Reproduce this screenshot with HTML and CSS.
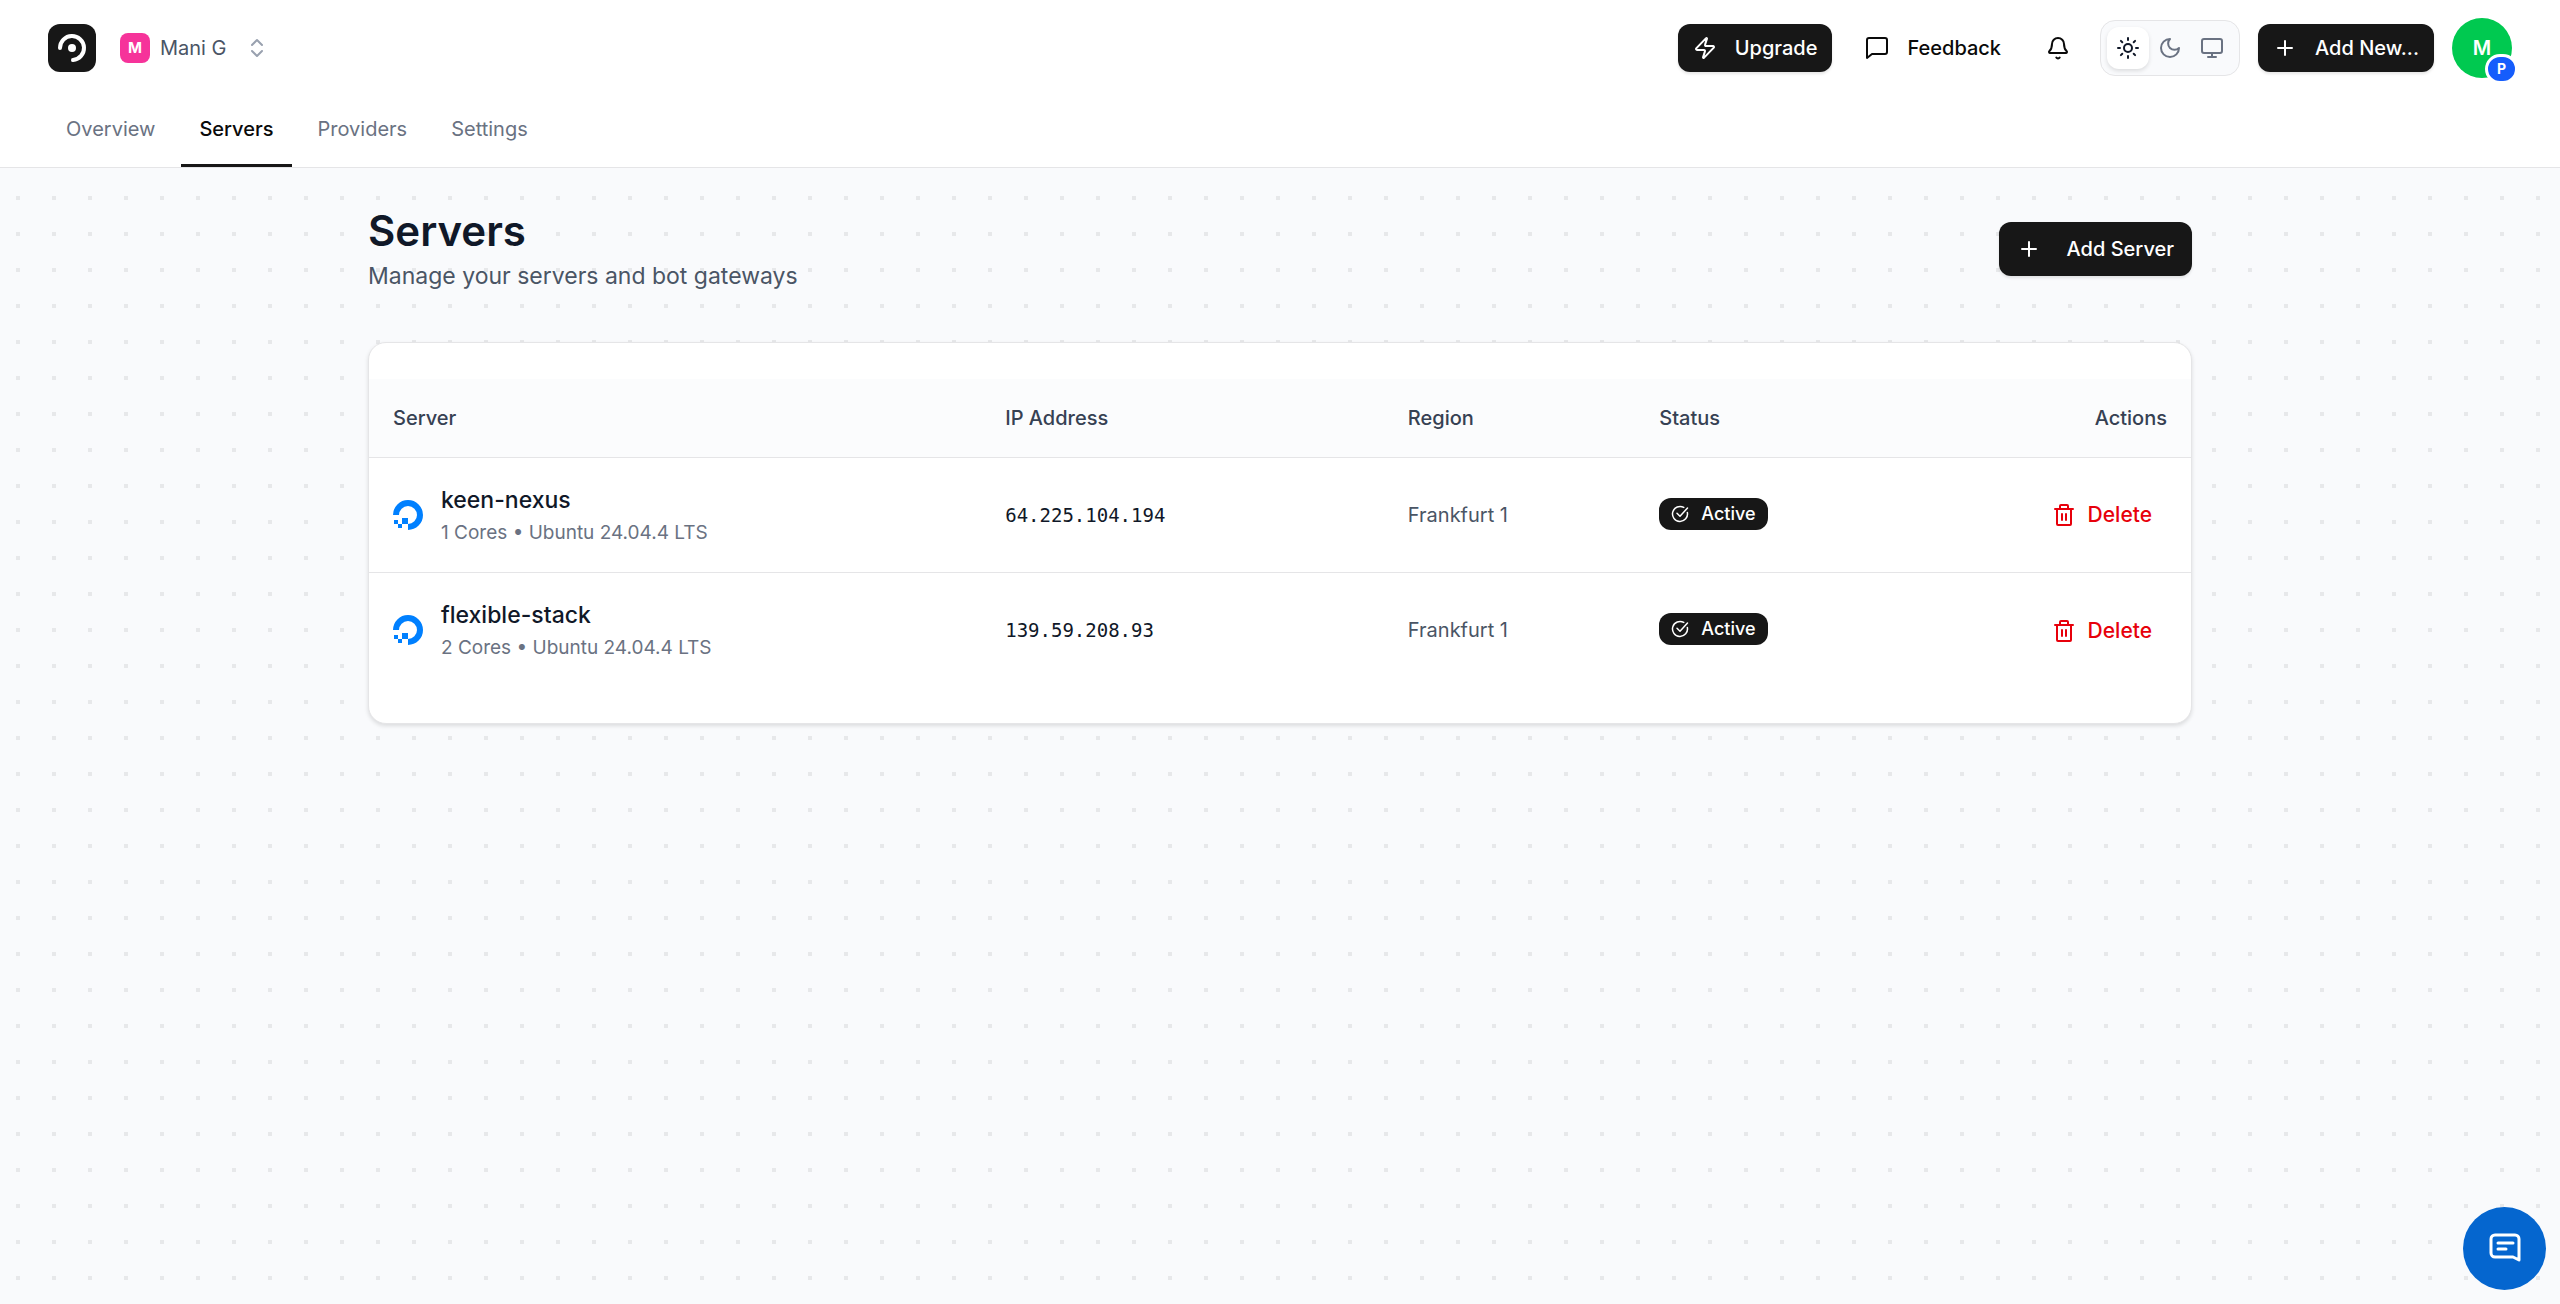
FILE: index.html
```html
<!DOCTYPE html>
<html lang="en">
<head>
<meta charset="utf-8">
<meta name="viewport" content="width=device-width, initial-scale=1">
<title>Servers</title>
<link rel="stylesheet" href="styles.css">
</head>
<body>
<svg class="sprite" aria-hidden="true">
  <symbol id="i-plus" viewBox="0 0 24 24"><path d="M12 5v14M5 12h14"/></symbol>
  <symbol id="i-trash" viewBox="0 0 24 24"><path d="M3 6h18M5 6v15a1 1 0 0 0 1 1h12a1 1 0 0 0 1-1V6M8 6V3a1 1 0 0 1 1-1h6a1 1 0 0 1 1 1v3M10 11v6M14 11v6"/></symbol>
  <symbol id="i-check" viewBox="0 0 24 24"><path d="M21.8 10A10 10 0 1 1 17 3.3"/><path d="m8 11 4 4L22 4"/></symbol>
  <symbol id="i-ocean" viewBox="0 0 30 30"><path fill="currentColor" stroke="none" d="M15 30v-6a9 9 0 1 0-9-9H0a15 15 0 1 1 15 15zM9 18h6v6H9zM5 24h4v4H5zM1 20h4v4H1z"/></symbol>
</svg>
<header class="header">
  <div class="topbar">
    <div class="brand">
      <a class="logo" href="#" aria-label="Home"><svg viewBox="0 0 48 48"><circle cx="24" cy="24" r="4" fill="currentColor" stroke="none"/><path d="M12 24a12 12 0 1 1 13 12"/></svg></a>
      <button class="org" type="button"><span class="org-mark">M</span><span>Mani G</span><svg class="icon chevrons" viewBox="0 0 24 24"><path d="m7 9 5-5 5 5M7 15l5 5 5-5"/></svg></button>
    </div>
    <div class="tools">
      <button class="btn btn-dark" type="button"><svg class="icon" viewBox="0 0 24 24"><path d="M4 14a1 1 0 0 1-.78-1.63l9.9-10.2a.5.5 0 0 1 .86.46l-1.92 6.02A1 1 0 0 0 13 10h7a1 1 0 0 1 .78 1.63l-9.9 10.2a.5.5 0 0 1-.86-.46l1.92-6.02A1 1 0 0 0 11 14z"/></svg>Upgrade</button>
      <button class="btn btn-ghost" type="button"><svg class="icon" viewBox="0 0 24 24"><path d="M22 16a2 2 0 0 1-2 2H7l-5 4V4a2 2 0 0 1 2-2h16a2 2 0 0 1 2 2z"/></svg>Feedback</button>
      <button class="bell" type="button" aria-label="Notifications"><svg class="icon" viewBox="0 0 24 24"><path d="M10.3 21.500a2 2 0 0 0 3.4 0"/><path d="M3.3 15.3A1 1 0 0 0 4 17h16a1 1 0 0 0 .7-1.7C19.4 14 18 12.500 18 8A6 6 0 0 0 6 8c0 4.500-1.400 6-2.700 7.300"/></svg></button>
      <div class="themes" role="group" aria-label="Theme">
        <button class="theme theme-on" type="button" aria-label="Light"><svg class="icon" viewBox="0 0 24 24"><circle cx="12" cy="12" r="4"/><path d="M12 2v2M12 20v2M4.900 4.900l1.400 1.400M17.700 17.700l1.400 1.400M2 12h2M20 12h2M6.300 17.700l-1.400 1.400M19.100 4.900l-1.400 1.400"/></svg></button>
        <button class="theme" type="button" aria-label="Dark"><svg class="icon" viewBox="0 0 24 24"><path d="M12 3a6 6 0 0 0 9 9 9 9 0 1 1-9-9z"/></svg></button>
        <button class="theme" type="button" aria-label="System"><svg class="icon" viewBox="0 0 24 24"><rect x="2" y="3" width="20" height="14" rx="2"/><path d="M8 21h8M12 17v4"/></svg></button>
      </div>
      <button class="btn btn-dark" type="button"><svg class="icon" viewBox="0 0 24 24"><use href="#i-plus"/></svg>Add New...</button>
      <button class="avatar" type="button" aria-label="Account">M<span class="plan">P</span></button>
    </div>
  </div>
  <nav class="tabs">
    <a class="tab" href="#">Overview</a>
    <a class="tab tab-on" href="#" aria-current="page">Servers</a>
    <a class="tab" href="#">Providers</a>
    <a class="tab" href="#">Settings</a>
  </nav>
</header>
<main class="page">
  <div class="page-head">
    <div>
      <h1 class="title">Servers</h1>
      <p class="subtitle">Manage your servers and bot gateways</p>
    </div>
    <button class="btn btn-dark btn-server" type="button"><svg class="icon" viewBox="0 0 24 24"><use href="#i-plus"/></svg>Add Server</button>
  </div>
  <section class="card">
    <table class="servers">
      <colgroup><col class="c-server"><col class="c-ip"><col class="c-region"><col class="c-status"><col></colgroup>
      <thead>
        <tr><th>Server</th><th>IP Address</th><th>Region</th><th>Status</th><th class="end">Actions</th></tr>
      </thead>
      <tbody>
        <tr>
          <td><div class="server"><svg class="ocean"><use href="#i-ocean"/></svg><div><div class="name">keen-nexus</div><div class="spec">1 Cores • Ubuntu 24.04.4 LTS</div></div></div></td>
          <td><code class="ip">64.225.104.194</code></td>
          <td class="region">Frankfurt 1</td>
          <td><span class="badge"><svg class="icon"><use href="#i-check"/></svg>Active</span></td>
          <td class="end"><button class="delete" type="button"><svg class="icon"><use href="#i-trash"/></svg>Delete</button></td>
        </tr>
        <tr>
          <td><div class="server"><svg class="ocean"><use href="#i-ocean"/></svg><div><div class="name">flexible-stack</div><div class="spec">2 Cores • Ubuntu 24.04.4 LTS</div></div></div></td>
          <td><code class="ip">139.59.208.93</code></td>
          <td class="region">Frankfurt 1</td>
          <td><span class="badge"><svg class="icon"><use href="#i-check"/></svg>Active</span></td>
          <td class="end"><button class="delete" type="button"><svg class="icon"><use href="#i-trash"/></svg>Delete</button></td>
        </tr>
      </tbody>
    </table>
  </section>
</main>
<button class="chat" type="button" aria-label="Open chat"><svg viewBox="0 0 34 34"><path d="M7 3h20a4 4 0 0 1 4 4v21l-6-3H7a4 4 0 0 1-4-4V7a4 4 0 0 1 4-4zM10 11h15M10 17h8"/></svg></button>
</body>
</html>
```
FILE: styles.css
```css
:root {
  --ink: #171717;
  --bg: #f9fafc;
  --dot: #e7e8ea;
  --line: #e5e5e7;
  --muted: #6a7282;
  --slate: #4a5565;
}
* { box-sizing: border-box; }
body {
  margin: 0;
  min-height: 100vh;
  font: 400 20px/30px Inter, "Liberation Sans", sans-serif;
  color: #101828;
  background-color: var(--bg);
  background-image:
    linear-gradient(90deg, var(--bg) 16px, transparent 16px, transparent 20px, var(--bg) 20px),
    linear-gradient(var(--bg) 16px, var(--dot) 16px, var(--dot) 20px, var(--bg) 20px);
  background-size: 36px 36px;
}
button { font: inherit; color: inherit; border: 0; background: none; padding: 0; cursor: pointer; }
a { color: inherit; text-decoration: none; }
svg { fill: none; stroke: currentColor; stroke-width: 2; stroke-linecap: round; stroke-linejoin: round; flex: none; }
.sprite { position: absolute; width: 0; height: 0; }
.icon { width: 24px; height: 24px; }

.header { background: #fff; border-bottom: 1px solid var(--line); }
.topbar { display: flex; justify-content: space-between; align-items: center; height: 96px; padding: 0 48px; }
.brand, .tools, .org, .btn { display: flex; align-items: center; }
.brand { gap: 24px; }
.logo { width: 48px; height: 48px; border-radius: 12px; background: var(--ink); color: #fff; }
.logo svg { display: block; width: 48px; height: 48px; stroke-width: 4; }
.org { gap: 10px; color: var(--slate); }
.org-mark { width: 30px; height: 30px; border-radius: 8px; background: #f6339a; color: #fff; font-size: 15px; font-weight: 700; }
.chevrons { margin-left: 8px; color: #99a1af; }
.tools { gap: 18px; }
.btn { height: 48px; border-radius: 12px; font-weight: 500; gap: 18px; padding: 0 15px; }
.btn-dark { background: var(--ink); color: #fff; box-shadow: 0 2px 3px #0000001a; }
.btn-ghost { color: #0a0a0a; }
.bell { display: grid; place-items: center; width: 48px; height: 48px; color: #0a0a0a; }
.themes { display: flex; padding: 6px; border: 1px solid var(--line); border-radius: 15px; background: var(--bg); }
.theme { display: grid; place-items: center; width: 42px; height: 42px; border-radius: 12px; color: var(--muted); }
.theme-on { background: #fff; color: #101828; box-shadow: 0 2px 4px #0000001f; }
.avatar { position: relative; width: 60px; height: 60px; border-radius: 50%; background: #00c950; color: #fff; font-size: 20px; font-weight: 600; }
.plan { position: absolute; right: -6px; bottom: -6px; width: 33px; height: 30px; border: 3px solid #fff; border-radius: 15px; background: #155dfc; font-size: 14px; font-weight: 700; line-height: 24px; }

.tabs { display: flex; gap: 8px; height: 71px; padding: 0 48px; }
.tab { padding: 18px; border-bottom: 3px solid transparent; color: var(--muted); }
.tab-on { color: #0a0a0a; border-color: var(--ink); font-weight: 500; }

.page { max-width: 1920px; margin: 0 auto; padding: 36px 48px; }
.page-head { display: flex; justify-content: space-between; align-items: center; margin-bottom: 48px; }
.title { margin: 0; font-size: 42px; line-height: 54px; font-weight: 600; }
.subtitle { margin: 0; font-size: 23px; line-height: 36px; color: var(--slate); }
.btn-server { height: 54px; padding: 0 18px; gap: 26px; }

.card { padding: 36px 0; border: 1px solid var(--line); border-radius: 18px; background: #fff; box-shadow: 0 2px 4px #0000001f; }
.servers { width: 100%; table-layout: fixed; border-collapse: collapse; }
.c-server { width: 33.6%; }
.c-ip { width: 22.1%; }
.c-region { width: 13.8%; }
.c-status { width: 15%; }
.servers th { height: 78px; padding: 0 24px; text-align: left; font-weight: 500; color: #364153; background: #fbfcfd; }
.servers td { height: 115px; padding: 0 24px; }
.servers tr { border-bottom: 1px solid var(--line); }
.servers tbody tr:last-child { border-bottom: 0; }
.servers .end { text-align: right; }
.server { display: flex; align-items: center; gap: 18px; }
.ocean { width: 30px; height: 30px; color: #0080ff; }
.name { font-size: 23px; line-height: 36px; font-weight: 500; }
.spec { font-size: 19px; color: var(--muted); }
.ip { font: 400 19px/30px "DejaVu Sans Mono", monospace; }
.region { color: var(--slate); }
.badge { display: inline-flex; align-items: center; gap: 12px; height: 32px; padding: 0 12px; border-radius: 12px; background: var(--ink); color: #fff; font-size: 18px; font-weight: 500; }
.badge .icon { width: 18px; height: 18px; }
.delete { display: inline-flex; align-items: center; vertical-align: middle; gap: 12px; padding: 0 15px; color: #e7000b; font-size: 21px; font-weight: 500; }

.chat { position: fixed; right: 14px; bottom: 14px; display: grid; place-items: center; width: 83px; height: 83px; border-radius: 50%; background: #0566cf; color: #fff; }
.chat svg { width: 34px; height: 34px; stroke-width: 3; }
```
